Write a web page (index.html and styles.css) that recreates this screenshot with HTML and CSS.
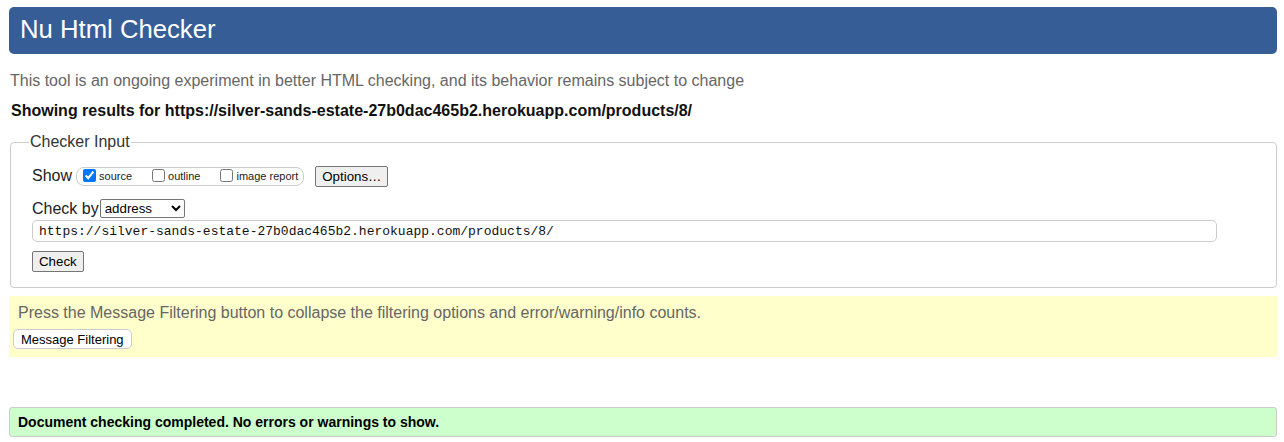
FILE: index.html
```html
<!DOCTYPE html>
<html>
<head>
<meta charset="utf-8">
<title>Nu Html Checker</title>
<link rel="stylesheet" href="styles.css">
</head>
<body>
<header class="masthead"><h1 class="title">Nu Html Checker</h1></header>
<p class="intro">This tool is an ongoing experiment in better HTML checking, and its behavior remains subject to change</p>
<p class="results-for">Showing results for https://silver-sands-estate-27b0dac465b2.herokuapp.com/products/8/</p>
<fieldset class="checker">
  <legend class="legend">Checker Input</legend>
  <div class="row show-row">
    <span class="label">Show</span>
    <span class="opts">
      <label class="opt"><input type="checkbox" checked> source</label>
      <label class="opt"><input type="checkbox"> outline</label>
      <label class="opt"><input type="checkbox"> image report</label>
    </span>
    <button class="btn options">Options…</button>
  </div>
  <div class="row by-row">
    <span class="label">Check by</span>
    <select class="select"><option>address</option></select>
  </div>
  <input class="url" type="text" value="https://silver-sands-estate-27b0dac465b2.herokuapp.com/products/8/">
  <div class="row"><button class="btn check">Check</button></div>
</fieldset>
<section class="filters">
  <p class="filters-text">Press the Message Filtering button to collapse the filtering options and error/warning/info counts.</p>
  <button class="filter-btn">Message Filtering</button>
</section>
<div class="success">Document checking completed. No errors or warnings to show.</div>
</body>
</html>
```
FILE: styles.css
```css
html, body { margin: 0; padding: 0; background: #fff; }
body {
  font-family: "Liberation Sans", Arial, sans-serif;
  color: #111;
  padding: 7px 7px 0 9px;
}
.masthead {
  background: #365d95;
  border-radius: 5px;
  height: 47px;
  display: flex;
  align-items: center;
  padding-left: 11px;
}
.title {
  margin: 0;
  font-size: 25.7px;
  font-weight: normal;
  color: #fff;
  line-height: 1;
  position: relative;
  top: -1px;
}
.intro {
  margin: 17px 0 0 1px;
  font-size: 16px;
  color: #666;
  line-height: 20px;
}
.results-for {
  margin: 10px 0 0 2px;
  font-size: 16px;
  font-weight: bold;
  color: #111;
  line-height: 20px;
}
.checker {
  margin: 12px 0 0 1px;
  border: 1px solid #ccc;
  border-radius: 4px;
  padding: 4px 20px 15px 21px;
}
.legend {
  font-size: 16px;
  color: #333;
  padding: 0 1px;
  margin-left: -3px;
}
.row { display: flex; align-items: center; }
.show-row { margin-top: 11px; height: 20px; }
.label { font-size: 16px; color: #222; margin-right: 4px; }
.opts {
  display: inline-flex;
  align-items: center;
  border: 1px solid #ccc;
  border-radius: 8px;
  height: 17px;
  padding: 0 5px 0 5px;
  gap: 19px;
}
.opt {
  font-size: 11px;
  color: #222;
  display: inline-flex;
  align-items: center;
}
.opt input { margin: 0 3px 0 1px; width: 13px; height: 13px; position: relative; top: -1px; }
.btn {
  font-family: "Liberation Sans", Arial, sans-serif;
  font-size: 13.3px;
  color: #000;
  background: #efefef;
  border: 1px solid #767676;
  border-radius: 2px;
  height: 21px;
  padding: 0 6px;
}
.options { margin-left: 11px; }
.by-row { margin-top: 13px; }
.select {
  font-family: "Liberation Sans", Arial, sans-serif;
  font-size: 13.3px;
  width: 85px;
  height: 19px;
  margin-left: -3px;
  border: 1px solid #767676;
  border-radius: 2px;
  background: #fff;
  color: #000;
}
.url {
  display: block;
  box-sizing: border-box;
  width: 1185px;
  height: 22px;
  margin-top: 2px;
  border: 1px solid #ccc;
  border-radius: 5px;
  padding: 0 6px;
  font-family: "Liberation Mono", "Courier New", monospace;
  font-size: 13px;
  color: #111;
}
.check { margin-top: 9px; }
.filters {
  margin-top: 8px;
  background: #ffc;
  padding: 7px 4px 8px 4px;
}
.filters-text {
  margin: 0 0 0 5px;
  font-size: 16px;
  color: #666;
  line-height: 20px;
}
.filter-btn {
  margin-top: 6px;
  font-family: "Liberation Sans", Arial, sans-serif;
  font-size: 13px;
  color: #000;
  background: #fff;
  border: 1px solid #ccc;
  border-radius: 5px;
  height: 20px;
  padding: 0 7px;
}
.success {
  margin-top: 50px;
  background: #cfc;
  border: 1px solid #ccc;
  border-radius: 3px;
  height: 30px;
  box-sizing: border-box;
  display: flex;
  align-items: center;
  padding-left: 8px;
  font-size: 14px;
  font-weight: bold;
  color: #000;
}
```
